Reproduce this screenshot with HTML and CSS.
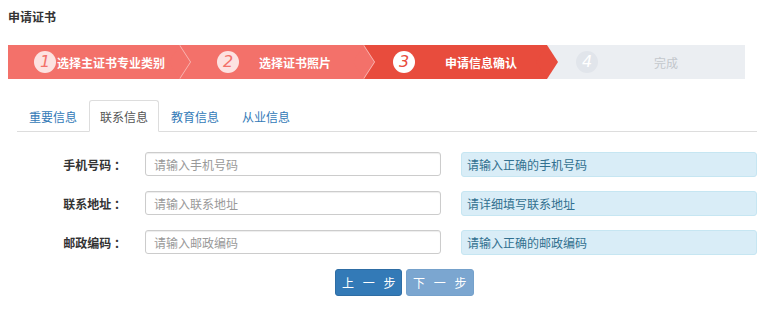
FILE: index.html
```html
<!DOCTYPE html>
<html lang="zh-CN">
<head>
    <meta charset="UTF-8">
    <title>申请证书</title>
    <link rel="stylesheet" href="styles.css">
</head>
<body>
    <div id="page">
        <div class="title">申请证书</div>
        <!-- 步骤条 -->
        <ul class="steps">
            <li class="step done"><span class="num">1</span><span class="txt">选择主证书专业类别</span></li>
            <li class="step done"><span class="num">2</span><span class="txt">选择证书照片</span></li>
            <li class="step cur"><span class="num">3</span><span class="txt">申请信息确认</span></li>
            <li class="step todo"><span class="num">4</span><span class="txt">完成</span></li>
        </ul>
        <div class="panel">
            <ul class="tabs">
                <li><a href="#">重要信息</a></li>
                <li class="active"><a href="#">联系信息</a></li>
                <li><a href="#">教育信息</a></li>
                <li><a href="#">从业信息</a></li>
            </ul>
            <div class="form">
                <div class="row">
                    <label>手机号码 ：</label>
                    <input type="text" placeholder="请输入手机号码">
                    <div class="tip">请输入正确的手机号码</div>
                </div>
                <div class="row">
                    <label>联系地址 ：</label>
                    <input type="text" placeholder="请输入联系地址">
                    <div class="tip">请详细填写联系地址</div>
                </div>
                <div class="row">
                    <label>邮政编码 ：</label>
                    <input type="text" placeholder="请输入邮政编码">
                    <div class="tip">请输入正确的邮政编码</div>
                </div>
            </div>
            <div class="btns">
                <button class="btn">上 一 步</button>
                <button class="btn disabled">下 一 步</button>
            </div>
        </div>
    </div>
</body>
</html>
```

FILE: styles.css
```css
body{
    margin: 0;
    font-family: "Microsoft YaHei", "Noto Sans CJK SC", sans-serif;
    font-size: 12px;
    color: #333;
    background: #fff;
}
#page{
    padding: 10px 8px 0 8px;
}
.title{
    font-weight: bold;
    line-height: 14px;
    height: 14px;
}
/* 步骤条 */
.steps{
    display: flex;
    margin: 21px 31px 0 0;
    padding: 0;
    list-style: none;
    height: 34px;
    overflow: hidden;
}
.step{
    display: flex;
    align-items: center;
    position: relative;
    color: #fff;
    font-weight: bold;
    white-space: nowrap;
}
.step:nth-child(1){ width: 172px; z-index: 4; }
.step:nth-child(2){ width: 184px; z-index: 3; }
.step:nth-child(3){ width: 183px; z-index: 2; }
.step:nth-child(4){ flex: 1; }
.step::after{
    content: "";
    position: absolute;
    top: 5px;
    right: -12px;
    width: 24px;
    height: 24px;
    box-sizing: border-box;
    transform: scaleX(0.65) rotate(45deg);
    z-index: 2;
}
.step.done{
    background-color: #f3716a;
}
.step.done::after{
    background-color: #f3716a;
    border-top: 1px solid rgba(255,255,255,0.5);
    border-right: 1px solid rgba(255,255,255,0.5);
}
.step.cur{
    background-color: #e84c3d;
}
.step.cur::after{
    background-color: #e84c3d;
}
.step.todo{
    background-color: #ebeef2;
    color: #c3c7cc;
    font-weight: normal;
}
.step.todo::after{
    display: none;
}
.step .num{
    flex: none;
    width: 22px;
    height: 22px;
    line-height: 22px;
    border-radius: 50%;
    text-align: center;
    font-family: "DejaVu Sans", sans-serif;
    font-weight: 200;
    font-style: italic;
    font-size: 16px;
}
.step:nth-child(1) .num{ margin-left: 26px; }
.step:nth-child(2) .num{ margin-left: 37px; }
.step:nth-child(3) .num{ margin-left: 29px; }
.step:nth-child(4) .num{ margin-left: 29px; }
.step.done .num{
    background-color: rgba(255,255,255,0.8);
    color: #f3716a;
}
.step.cur .num{
    background-color: #fff;
    color: #e84c3d;
}
.step.todo .num{
    background-color: #e1e5eb;
    color: #fff;
}
.step .txt{
    flex: 1;
    text-align: center;
    position: relative;
    z-index: 3;
}
.step:nth-child(1) .txt{ padding-right: 14px; }
.step:nth-child(2) .txt{ padding-right: 13px; }
.step:nth-child(4) .txt{ padding-right: 11px; }
/* 标签页 */
.panel{
    margin: 21px 19px 0 9px;
}
.tabs{
    display: flex;
    margin: 0;
    padding: 0 0 0 1px;
    list-style: none;
    border-bottom: 1px solid #ddd;
    height: 31px;
}
.tabs li{
    margin-right: 1px;
    margin-bottom: -1px;
}
.tabs a{
    display: block;
    height: 31px;
    line-height: 31px;
    padding: 0 10px;
    color: #337ab7;
    text-decoration: none;
    white-space: nowrap;
    border: 1px solid transparent;
    border-radius: 3px 3px 0 0;
    box-sizing: border-box;
}
.tabs li.active a{
    color: #555;
    background: #fff;
    border-color: #ddd #ddd transparent;
    height: 32px;
}
/* 表单 */
.form{
    padding-top: 20px;
}
.row{
    display: flex;
    align-items: center;
    height: 24px;
    margin-bottom: 15px;
}
.row label{
    width: 114px;
    text-align: right;
    font-weight: bold;
    color: #333;
    white-space: nowrap;
    margin-right: 19px;
    margin-left: -5px;
}
.row input{
    width: 296px;
    height: 24px;
    box-sizing: border-box;
    border: 1px solid #ccc;
    border-radius: 3px;
    padding: 0 8px;
    font-family: inherit;
    font-size: 12px;
    color: #555;
    box-shadow: inset 0 1px 1px rgba(0,0,0,0.075);
    outline: none;
}
.row input::placeholder{
    color: #999;
}
.tip{
    flex: 1;
    height: 25px;
    line-height: 23px;
    box-sizing: border-box;
    margin-left: 20px;
    padding: 0 5px;
    background-color: #d9edf7;
    border: 1px solid #c6e6f2;
    border-radius: 3px;
    color: #31708f;
}
.btns{
    display: flex;
    gap: 4px;
    padding-left: 318px;
}
.btn{
    width: 67px;
    height: 27px;
    border: 1px solid #2e6da4;
    border-radius: 3px;
    background-color: #337ab7;
    color: #fff;
    font-family: inherit;
    font-size: 12px;
    letter-spacing: 3px;
    white-space: pre;
    cursor: pointer;
}
.btn.disabled{
    width: 68px;
    background-color: #7ba6d0;
    border-color: #75a1cb;
}
```
